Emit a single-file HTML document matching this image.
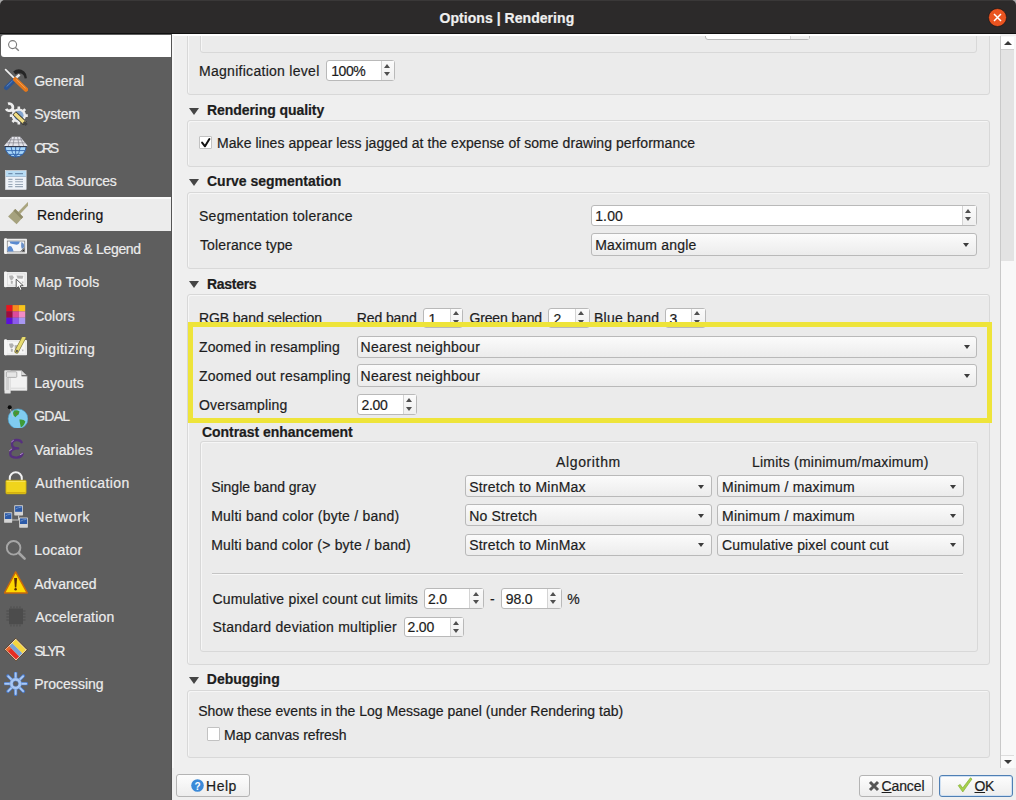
<!DOCTYPE html>
<html><head><meta charset="utf-8">
<style>
*{box-sizing:border-box}
html,body{margin:0;padding:0}
body{width:1016px;height:800px;overflow:hidden;position:relative;background:#efefef;font-family:"Liberation Sans",sans-serif;font-size:14px;color:#1d1d1d}
.a{position:absolute}
.t{position:absolute;white-space:nowrap;line-height:16px;-webkit-text-stroke:0.2px currentColor}
.b{font-weight:bold}
.w{color:#ececec}
.d{color:#141414}
#title{left:0;top:0;width:1016px;height:34px;background:#2c2a2a;border-radius:5px 5px 0 0}
#side{left:0;top:34px;width:172px;height:766px;background:#5e5e5e}
.si{position:absolute;left:0;width:171px;height:33.5px}
.si svg{position:absolute;left:4px;top:5px}
.si.sel{background:#ececec;border-top:2px solid #fafafa}
.si.sel svg{top:3px}
.gb{position:absolute;background:#ebebeb;border:1px solid #d8d8d8;border-radius:3px;box-shadow:inset 1px 1px 0 #f6f6f6}
.tri{position:absolute;width:0;height:0;border-left:5px solid transparent;border-right:5px solid transparent;border-top:7px solid #454545}
.cb{position:absolute;border:1px solid #b9b9b9;border-radius:3px;background:linear-gradient(#fbfbfb,#ececec)}
.cb .ar{position:absolute;right:6.6px;width:0;height:0;border-left:3.9px solid transparent;border-right:3.9px solid transparent;border-top:4.2px solid #3c3c3c}
.sp{position:absolute;border:1px solid #b9b9b9;border-radius:3px;background:#fff}
.sp .bt{position:absolute;right:0;top:0;bottom:0;border-left:1px solid #d4d4d4;background:linear-gradient(#fbfbfb,#efefef)}
.sp .up,.sp .dn{position:absolute;left:2.2px;width:0;height:0;border-left:3.7px solid transparent;border-right:3.7px solid transparent}
.sp .up{border-bottom:4px solid #505050}
.sp .dn{border-top:4px solid #505050}
.chk{position:absolute;width:13px;height:13px;background:#fff;border:1px solid #bdbdbd;border-radius:2px}
.btn{position:absolute;border:1px solid #b4b4b4;border-radius:3px;background:linear-gradient(#fdfdfd,#ededed)}
</style></head><body>
<div class="a" style="left:0;top:0;width:6px;height:6px;background:#a8a8a8"></div><div class="a" style="left:1010px;top:0;width:6px;height:6px;background:#a8a8a8"></div>
<div id="title" class="a"></div>
<div class="a" style="left:4px;top:0;width:1008px;height:1px;background:#3a3838"></div>
<svg class="a" style="left:988px;top:8px" width="19" height="19" viewBox="0 0 19 19"><circle cx="9.5" cy="9.5" r="9" fill="#e95420" stroke="#1a1010" stroke-width="0.6"/><path d="M6 6L13 13M13 6L6 13" stroke="#fff" stroke-width="1.5"/></svg>
<div id="tt" class="t b" style="left:439.60px;top:9.85px;letter-spacing:0.044px;color:#efefef">Options | Rendering</div>
<div class="a" style="left:0;top:33px;width:1016px;height:1px;background:#111"></div>
<div class="a" style="left:172px;top:34px;width:828px;height:1.5px;background:#fff"></div>
<div id="side" class="a"></div>
<div class="a" style="left:170.5px;top:34px;width:1.5px;height:766px;background:#555"></div>
<div class="a" style="left:172px;top:35px;width:2px;height:733px;background:#f7f7f7"></div>
<div class="a" style="left:1px;top:34.5px;width:170px;height:22.5px;background:#fff;border-radius:3px 0 0 3px"></div>
<svg class="a" style="left:8px;top:40px" width="12" height="12" viewBox="0 0 12 12"><circle cx="4.6" cy="4.6" r="4" fill="none" stroke="#7a7a7a" stroke-width="1.1"/><path d="M7.4 7.4L10.8 10.8" stroke="#808080" stroke-width="1.4"/></svg>
<div class="si" style="top:63.30px"><svg width="24" height="24" viewBox="0 0 24 24"><path d="M9.2 3.6Q14.5 -0.8 20.2 3.4Q23 5.8 22.8 10.2L20.6 10.4Q20.2 6.8 17.2 5.6Q14 4.6 11.4 6.6Z" fill="#262626"/>
<path d="M12.2 9.6L15.6 6.6" stroke="#e8e8e8" stroke-width="2.6"/>
<path d="M1.6 1.6L10.9 10.8" stroke="#f0f0f0" stroke-width="1.7" stroke-linecap="round"/>
<path d="M9.6 12.6L2.2 19.8" stroke="#2c5594" stroke-width="4.4" stroke-linecap="round"/><path d="M8.6 12.8L2.6 18.6" stroke="#5c88c8" stroke-width="1"/>
<path d="M11.2 11.4L22 21.6" stroke="#e4781c" stroke-width="4.4" stroke-linecap="round"/><path d="M12.2 11.4L21.6 20.4" stroke="#f4a050" stroke-width="1"/></svg></div>
<div id="s0" class="t w" style="left:34.20px;top:72.85px;letter-spacing:0.009px;">General</div>
<div class="si" style="top:96.83px"><svg width="24" height="24" viewBox="0 0 24 24"><g fill="#ececec"><circle cx="14.8" cy="13.6" r="7.2"/><g stroke="#ececec" stroke-width="2.6"><path d="M14.8 4.6V22.6M5.8 13.6H23.8M8.4 7.2L21.2 20M21.2 7.2L8.4 20"/></g></g>
<circle cx="14.8" cy="13.6" r="4.8" fill="#84a6d0"/>
<path d="M4.05 1.93A3.5 3.5 0 1 1 2.18 6.79" fill="none" stroke="#efefef" stroke-width="2.8"/><path d="M7.6 7.6L12.2 11.8" stroke="#efefef" stroke-width="2.8"/>
<path d="M10.2 11L21 21.4" stroke="#2e2e2e" stroke-width="5"/><path d="M10.6 11.4L20.6 21" stroke="#f0dc82" stroke-width="3.4"/><path d="M19.6 20L22.6 23" stroke="#444" stroke-width="3"/></svg></div>
<div id="s1" class="t w" style="left:34.20px;top:106.38px;letter-spacing:-0.180px;">System</div>
<div class="si" style="top:130.36px"><svg width="24" height="24" viewBox="0 0 24 24"><path d="M7.8 1.8H16.2L23.4 10.4Q23.4 11 23 11.6H0.6Q0.2 11 0.3 10.4Z" fill="#e4e4ea"/>
<g stroke="#8c8c94" stroke-width="0.8" fill="none"><path d="M5.5 4.8H18.5M2.6 7.8H21.4M10.4 1.8L8.8 11.6M13.6 1.8L15.2 11.6M7.8 1.8L4 11.6M16.2 1.8L20 11.6"/></g>
<path d="M1.2 11.6H22.1A10.45 10.45 0 0 1 1.2 11.6Z" fill="#a8d6fa" stroke="#2f62aa" stroke-width="1"/>
<g stroke="#2f62aa" stroke-width="0.9" fill="none"><path d="M2.2 15.6H21.1M5 19.4H18.3M11.65 11.6V22M7 11.6Q7.6 18.5 11.65 22M16.3 11.6Q15.7 18.5 11.65 22"/></g>
<path d="M0.4 11.6H23" stroke="#303038" stroke-width="0.9"/></svg></div>
<div id="s2" class="t w" style="left:34.20px;top:139.91px;letter-spacing:-2.375px;">CRS</div>
<div class="si" style="top:163.89px"><svg width="24" height="24" viewBox="0 0 24 24"><rect x="1.5" y="1.65" width="20.65" height="18.9" fill="#eef2f8" stroke="#e4e8ee" stroke-width="0.6"/>
<rect x="1.8" y="1.9" width="20.1" height="5.4" fill="#b8dcf4"/><path d="M1.8 7.5H21.9" stroke="#9ab4cc" stroke-width="0.8"/>
<g stroke="#6f8fb0" stroke-width="1.2"><path d="M4.3 4.6H8.5M11.1 4.6H19"/></g>
<g stroke="#9aa8b8" stroke-width="1.1"><path d="M4.3 10.4H8.5M11.1 10.4H19M4.3 12.8H8.5M11.1 12.8H19M4.3 15.5H8.5M11.1 15.5H19M4.3 17.6H8.5M11.1 17.6H19"/></g></svg></div>
<div id="s3" class="t w" style="left:34.20px;top:173.44px;letter-spacing:-0.201px;">Data Sources</div>
<div class="si sel" style="top:197.42px"><svg width="24" height="24" viewBox="0 0 24 24"><path d="M24.4 1.4L15.6 10.4" stroke="#aaa57f" stroke-width="2.8" stroke-linecap="round"/>
<path d="M11.3 7L19.1 15.1L12.6 22.3L4.1 14.5Z" fill="#a6a27e"/>
<path d="M11.3 7L19.1 15.1L17.4 16.9L9.5 8.8Z" fill="#8f8b68"/></svg></div>
<div id="s4" class="t d" style="left:37.00px;top:206.55px;letter-spacing:0.200px;">Rendering</div>
<div class="si" style="top:230.95px"><svg width="24" height="24" viewBox="0 0 24 24"><rect x="0.4" y="2.8" width="22.6" height="15" rx="0.8" fill="#ececec"/><rect x="0.1" y="2.2" width="3" height="15.8" rx="1.2" fill="#f6f6f6"/>
<rect x="3.25" y="5.05" width="17.5" height="10.85" fill="#f4f6fa" stroke="#777" stroke-width="0.7"/>
<path d="M5.6 5.4H15.8Q15 9 11.6 8.6Q8.6 8.2 6.4 7.6Z" fill="#5a8ad0"/>
<path d="M3.6 15.6V12Q5.2 9 7.4 10.6Q8.8 12.4 9.6 15.6Z" fill="#5a8ad0"/>
<path d="M17.4 6Q20.4 7 20.4 11L18 13Q16.6 11 17.4 6Z" fill="#6a90c8"/>
<path d="M16.2 15.6L20.4 11.6V15.6Z" fill="#2a2a2a"/><path d="M17 15.6L20.4 12.4" stroke="#eee" stroke-width="0.6"/></svg></div>
<div id="s5" class="t w" style="left:34.20px;top:240.50px;letter-spacing:-0.312px;">Canvas &amp; Legend</div>
<div class="si" style="top:264.48px"><svg width="24" height="24" viewBox="0 0 24 24"><rect x="0.4" y="3" width="22.6" height="15" rx="0.8" fill="#ececec"/><rect x="0.1" y="2.4" width="3" height="15.8" rx="1.2" fill="#f6f6f6"/>
<rect x="3.3" y="5" width="17.6" height="11" fill="#f6f6f6" stroke="#d0d0d0" stroke-width="0.5"/>
<g fill="#b4b4b4"><path d="M5 6.8L8.4 6.2L10 8.6L8 11.2L6 10.4Z"/><path d="M12.4 6.4L19.4 6.8L18.6 9.8L13.6 9.6Z"/><path d="M6.8 11.6L9 12.2L8.4 15.2L6.8 14.6Z"/><path d="M17.6 12.4L19.6 12.8L19 14.8Z"/></g>
<path d="M12.2 10.2V19.8L14.4 17.6L16.4 21.4L18 20.6L16.2 16.8L19.2 16.6Z" fill="#fafafa" stroke="#4a4a4a" stroke-width="0.9" stroke-linejoin="round"/></svg></div>
<div id="s6" class="t w" style="left:34.20px;top:274.03px;letter-spacing:0.182px;">Map Tools</div>
<div class="si" style="top:298.01px"><svg width="24" height="24" viewBox="0 0 24 24"><rect x="2.3" y="2.1" width="6.3" height="6.3" fill="#e8141e"/><rect x="8.6" y="2.1" width="6.3" height="6.3" fill="#f68a1e"/><rect x="14.9" y="2.1" width="6.3" height="6.3" fill="#f8c41c"/>
<rect x="2.3" y="8.4" width="6.3" height="6.3" fill="#9c0c3e"/><rect x="8.6" y="8.4" width="6.3" height="6.3" fill="#de4a9c"/><rect x="14.9" y="8.4" width="6.3" height="6.3" fill="#f28cc4"/>
<rect x="2.3" y="14.7" width="6.3" height="6.3" fill="#5c10dc"/><rect x="8.6" y="14.7" width="6.3" height="6.3" fill="#8c5aea"/><rect x="14.9" y="14.7" width="6.3" height="6.3" fill="#a898f2"/></svg></div>
<div id="s7" class="t w" style="left:34.20px;top:307.56px;letter-spacing:0.020px;">Colors</div>
<div class="si" style="top:331.54px"><svg width="24" height="24" viewBox="0 0 24 24"><rect x="0.4" y="2.9" width="22.6" height="15.4" rx="0.8" fill="#ececec"/><rect x="0.1" y="2.3" width="3" height="16" rx="1.2" fill="#f6f6f6"/>
<rect x="3.3" y="5" width="17.6" height="11.2" fill="#f6f6f6"/>
<g fill="#b0b0b0"><path d="M5 6.8L8.4 6.2L10 8.6L8 11.2L6 10.4Z"/><path d="M10.6 8.2L14 8L13.4 12L11 13.6Z"/><path d="M6.8 11.6L9 12.2L8.4 15.2L6.8 14.6Z"/><path d="M17.6 12.4L19.6 12.8L19 14.8Z"/></g>
<path d="M19.8 0.8L12.6 14.4" stroke="#8a8040" stroke-width="4.4" stroke-linecap="round"/><path d="M19.8 0.8L12.8 14" stroke="#e8dc70" stroke-width="3" stroke-linecap="round"/><path d="M13.4 13L12.4 15" stroke="#555" stroke-width="2"/></svg></div>
<div id="s8" class="t w" style="left:34.20px;top:341.09px;letter-spacing:0.434px;">Digitizing</div>
<div class="si" style="top:365.07px"><svg width="24" height="24" viewBox="0 0 24 24"><path d="M0.8 0.8H17.6L23 5.8V20.4H0.8Z" fill="#f2f2f2" stroke="#cfcfcf" stroke-width="0.6"/>
<path d="M17.6 0.8V5.8H23Z" fill="#5e5e5e"/><path d="M17.6 0.8L23 5.8H17.6Z" fill="#d8d8d8"/><path d="M17.6 5.8H23" stroke="#333" stroke-width="0.8"/>
<rect x="0.8" y="0.8" width="5.6" height="22.4" fill="#e6e6e6" stroke="#d4d4d4" stroke-width="0.5"/>
<g stroke="#a8a8a8" stroke-width="0.7"><path d="M2 9H5M2 11H5M2 13H5M2 15H5M2 17H5M2 19H5"/></g>
<rect x="2.4" y="1.8" width="10.4" height="5.6" rx="1" fill="#e6e6e6" stroke="#9a9a9a" stroke-width="0.7"/>
<path d="M7 18.2H21.5" stroke="#c8c8c8" stroke-width="0.6"/></svg></div>
<div id="s9" class="t w" style="left:34.20px;top:374.62px;letter-spacing:0.091px;">Layouts</div>
<div class="si" style="top:398.60px"><svg width="24" height="24" viewBox="0 0 24 24"><circle cx="14" cy="14.8" r="9.9" fill="#80ccf0" stroke="#4aa0cc" stroke-width="0.6"/>
<path d="M10 6.6Q13 5.6 15.6 7.4L14.6 10.6Q12.6 12 11.4 13.2L9.6 11.6Q8.4 8.6 10 6.6Z" fill="#3e9a38"/><path d="M11.4 8.4L13.8 8.8L12.8 10.6Z" fill="#8a6a30"/>
<path d="M15.4 15.6Q19.8 15 21.4 17.6Q20 22 16.8 23.4L16 19.6Z" fill="#3e9a38"/>
<path d="M6.2 4.8L9.2 13" stroke="#c8c8c8" stroke-width="0.8"/><circle cx="5.7" cy="3.3" r="2" fill="#080808"/></svg></div>
<div id="s10" class="t w" style="left:34.20px;top:408.15px;letter-spacing:-0.767px;">GDAL</div>
<div class="si" style="top:432.13px"><svg width="24" height="24" viewBox="0 0 24 24"><path d="M17.6 5.2C16.6 3.2 14.4 2.8 12 3C8.6 3.4 7.4 6 8.2 8.6C8.8 10.6 11 11.4 14.2 11.4M14.2 11.4C9.4 11.4 6.2 13.2 6.2 16.4C6.2 19.6 9.2 20.6 12.6 20.6C15.6 20.6 17.6 19.4 18.6 16.8" fill="none" stroke="#56307e" stroke-width="2.4" stroke-linecap="round"/>
<path d="M7.6 4.8L9.4 3.4M5.6 13.6L7.6 12.2M16.4 17.6L18.4 16.4" stroke="#b890d0" stroke-width="1" stroke-linecap="round"/></svg></div>
<div id="s11" class="t w" style="left:34.20px;top:441.68px;letter-spacing:0.150px;">Variables</div>
<div class="si" style="top:465.66px"><svg width="24" height="24" viewBox="0 0 24 24"><path d="M5.8 9.6V7.2A6 6 0 0 1 17.8 7.2V9.6" fill="none" stroke="#f2f2f2" stroke-width="2"/>
<rect x="1.85" y="9.24" width="20.3" height="13.66" rx="1" fill="#f0d41c" stroke="#b89c10" stroke-width="0.7"/>
<path d="M2.4 21.6H21.6" stroke="#d4b010" stroke-width="1.2"/><path d="M2.6 10.4H21.4" stroke="#f8e45c" stroke-width="1"/></svg></div>
<div id="s12" class="t w" style="left:35.20px;top:475.21px;letter-spacing:0.415px;">Authentication</div>
<div class="si" style="top:499.19px"><svg width="24" height="24" viewBox="0 0 24 24"><path d="M14.6 11.4V16H8" stroke="#c4c4c4" stroke-width="1.2" fill="none"/><path d="M14.6 14.6H16" stroke="#c4c4c4" stroke-width="1.2"/>
<rect x="10.25" y="1.3" width="8.75" height="10.15" rx="0.6" fill="#d4d4d4"/><rect x="11.1" y="2.2" width="7.1" height="5.6" fill="#2c5aa8"/><path d="M11.6 5Q14 3.6 17.6 3" stroke="#7ea4e0" stroke-width="0.8"/>
<rect x="0.1" y="8.3" width="8.05" height="10.5" rx="0.6" fill="#d4d4d4"/><rect x="0.9" y="9.2" width="6.5" height="5.8" fill="#2c5aa8"/><path d="M1.4 12Q3.6 10.6 6.8 10" stroke="#7ea4e0" stroke-width="0.8"/>
<rect x="15.15" y="13.55" width="8.75" height="10.15" rx="0.6" fill="#d4d4d4"/><rect x="16" y="14.4" width="7.1" height="5.6" fill="#2c5aa8"/><path d="M16.5 17.2Q18.9 15.8 22.5 15.2" stroke="#7ea4e0" stroke-width="0.8"/></svg></div>
<div id="s13" class="t w" style="left:34.20px;top:508.74px;letter-spacing:0.666px;">Network</div>
<div class="si" style="top:532.72px"><svg width="24" height="24" viewBox="0 0 24 24"><circle cx="9.6" cy="9.8" r="6.8" fill="none" stroke="#a6a6a6" stroke-width="1.9"/><path d="M15.1 15.2L20.6 20.6" stroke="#a6a6a6" stroke-width="2.6" stroke-linecap="round"/></svg></div>
<div id="s14" class="t w" style="left:34.20px;top:542.27px;letter-spacing:0.217px;">Locator</div>
<div class="si" style="top:566.25px"><svg width="24" height="24" viewBox="0 0 24 24"><path d="M11.65 0.95L23.2 21.95H0.45Z" fill="#ffd800" stroke="#c8680c" stroke-width="1.5" stroke-linejoin="round"/>
<path d="M10.1 6.9H13.1L12.3 16.4H10.9Z" fill="#5a2c04"/><circle cx="11.6" cy="18.2" r="1.25" fill="#5a2c04"/></svg></div>
<div id="s15" class="t w" style="left:34.20px;top:575.80px;letter-spacing:0.001px;">Advanced</div>
<div class="si" style="top:599.78px"><svg width="24" height="24" viewBox="0 0 24 24"><rect x="5" y="3.5" width="14" height="15.7" fill="#4c4c4c"/><g stroke="#535353" stroke-width="1.4"><path d="M7 1.2V3.5M10 1.2V3.5M13 1.2V3.5M16 1.2V3.5M7 19.2V21.6M10 19.2V21.6M13 19.2V21.6M16 19.2V21.6M2.4 6H5M2.4 9H5M2.4 12H5M2.4 15H5M19 6H21.6M19 9H21.6M19 12H21.6M19 15H21.6"/></g></svg></div>
<div id="s16" class="t w" style="left:35.20px;top:609.33px;letter-spacing:0.183px;">Acceleration</div>
<div class="si" style="top:633.31px"><svg width="24" height="24" viewBox="0 0 24 24"><path d="M11.8 0.3L23.2 11.7L12 22.9L0.6 11.35Z" fill="#f6e8d0" stroke="#4a2c10" stroke-width="0.8"/>
<path d="M11.8 1.6L21.9 11.7L18.3 15.3L8.2 5.2Z" fill="#f4d640"/>
<path d="M8.2 5.2L18.3 15.3L15.2 18.4L5.1 8.3Z" fill="#78a2d4"/>
<path d="M5.1 8.3L15.2 18.4L12 21.6L1.9 11.4Z" fill="#e42c24"/><path d="M5.1 8.3L1.9 11.4L4 13.5L7.2 10.4Z" fill="#ea6a2a"/></svg></div>
<div id="s17" class="t w" style="left:34.20px;top:642.86px;letter-spacing:-1.433px;">SLYR</div>
<div class="si" style="top:666.84px"><svg width="24" height="24" viewBox="0 0 24 24"><g stroke="#4a78c4" stroke-width="3.4" stroke-linecap="round"><path d="M11.65 0.8V22.5M0.8 11.66H22.5M3.9 3.9L19.4 19.4M19.4 3.9L3.9 19.4"/></g>
<g stroke="#a8c8f6" stroke-width="2" stroke-linecap="round"><path d="M11.65 1.2V22.1M1.2 11.66H22.1M4.2 4.2L19.1 19.1M19.1 4.2L4.2 19.1"/></g>
<circle cx="11.65" cy="11.66" r="5.8" fill="#a8c8f6" stroke="#6a94d4" stroke-width="0.5"/><circle cx="11.65" cy="11.66" r="2.6" fill="#5e5e5e" stroke="#4a70b0" stroke-width="0.6"/></svg></div>
<div id="s18" class="t w" style="left:34.20px;top:676.39px;letter-spacing:0.023px;">Processing</div>
<div id="vp" class="a" style="left:172px;top:35.5px;width:828px;height:732.5px;overflow:hidden"><div class="a" style="left:-172px;top:-35.5px;width:1016px;height:800px">
<div class="gb" style="left:186.6px;top:9.5px;width:803.4px;height:85.6px"></div>
<div class="gb" style="left:200.0px;top:-0.5px;width:776.6px;height:53.1px"></div>
<div class="sp" style="left:705px;top:18px;width:105px;height:22px"><div class="bt" style="width:19px"></div></div>
<div class="sp" style="left:325.6px;top:59.5px;width:69.5px;height:21.3px"><div class="bt" style="width:13.1px"><div class="up" style="top:3.1px"></div><div class="dn" style="top:11.6px"></div></div></div>
<div class="tri" style="left:188.75px;top:107.50px"></div>
<div class="gb" style="left:186.6px;top:119.5px;width:803.4px;height:47.6px"></div>
<div class="chk" style="left:199px;top:135.8px;width:13px;height:13px;border-radius:1px;border-color:#c2c2c2"><svg class="a" style="left:0;top:0" width="11" height="11" viewBox="0 0 11 11"><path d="M2.1 5.6L5 9.3L9.4 2" fill="none" stroke="#111" stroke-width="2" stroke-linejoin="round" stroke-linecap="round"/></svg></div>
<div class="tri" style="left:188.75px;top:178.75px"></div>
<div class="gb" style="left:186.6px;top:192.0px;width:803.4px;height:76.6px"></div>
<div class="sp" style="left:591.2px;top:205px;width:385.6px;height:20.8px"><div class="bt" style="width:13.8px"><div class="up" style="top:2.9px"></div><div class="dn" style="top:11.4px"></div></div></div>
<div class="cb" style="left:591.2px;top:233px;width:385.6px;height:22.8px"><div class="ar" style="top:8.9px"></div></div>
<div class="tri" style="left:188.75px;top:281.25px"></div>
<div class="gb" style="left:186.6px;top:294.0px;width:803.4px;height:371.0px"></div>
<div class="sp" style="left:423.20000000000005px;top:307.5px;width:40.1px;height:20.9px"><div class="bt" style="width:12.7px"><div class="up" style="top:2.9px"></div><div class="dn" style="top:11.4px"></div></div></div>
<div class="sp" style="left:548.4px;top:307.5px;width:41.2px;height:20.9px"><div class="bt" style="width:13.6px"><div class="up" style="top:2.9px"></div><div class="dn" style="top:11.4px"></div></div></div>
<div class="sp" style="left:664.6px;top:307.5px;width:41.3px;height:20.9px"><div class="bt" style="width:13.6px"><div class="up" style="top:2.9px"></div><div class="dn" style="top:11.4px"></div></div></div>
<div class="cb" style="left:357.1px;top:335.6px;width:620.3px;height:22.7px"><div class="ar" style="top:8.8px"></div></div>
<div class="cb" style="left:357.1px;top:364.4px;width:620.3px;height:22.6px"><div class="ar" style="top:8.8px"></div></div>
<div class="sp" style="left:357.1px;top:394.3px;width:59.8px;height:20.7px"><div class="bt" style="width:13.2px"><div class="up" style="top:2.8px"></div><div class="dn" style="top:11.3px"></div></div></div>
<div class="gb" style="left:199.6px;top:440.75px;width:778.0px;height:211.4px"></div>
<div class="cb" style="left:464.8px;top:475.3px;width:246.8px;height:22.2px"><div class="ar" style="top:8.6px"></div></div>
<div class="cb" style="left:716.9px;top:475.3px;width:246.9px;height:22.2px"><div class="ar" style="top:8.6px"></div></div>
<div class="cb" style="left:464.8px;top:504.3px;width:246.8px;height:22.2px"><div class="ar" style="top:8.6px"></div></div>
<div class="cb" style="left:716.9px;top:504.3px;width:246.9px;height:22.2px"><div class="ar" style="top:8.6px"></div></div>
<div class="cb" style="left:464.8px;top:533.5px;width:246.8px;height:22.2px"><div class="ar" style="top:8.6px"></div></div>
<div class="cb" style="left:716.9px;top:533.5px;width:246.9px;height:22.2px"><div class="ar" style="top:8.6px"></div></div>
<div class="a" style="left:212px;top:572.5px;width:751px;height:1px;background:#c4c4c4"></div><div class="a" style="left:212px;top:573.5px;width:751px;height:1px;background:#f7f7f7"></div>
<div class="sp" style="left:423.70000000000005px;top:588.3px;width:60.1px;height:20.3px"><div class="bt" style="width:13.4px"><div class="up" style="top:2.7px"></div><div class="dn" style="top:11.2px"></div></div></div>
<div class="sp" style="left:500.90000000000003px;top:588.3px;width:61.0px;height:20.3px"><div class="bt" style="width:13.9px"><div class="up" style="top:2.7px"></div><div class="dn" style="top:11.2px"></div></div></div>
<div class="sp" style="left:403.5px;top:617px;width:60.6px;height:20.2px"><div class="bt" style="width:13.6px"><div class="up" style="top:2.6px"></div><div class="dn" style="top:11.1px"></div></div></div>
<div class="tri" style="left:188.75px;top:676.75px"></div>
<div class="gb" style="left:186.6px;top:689.5px;width:803.4px;height:68.6px"></div>
<div class="chk" style="left:206.5px;top:727.3px;width:13px;height:13.5px;border-radius:1px;border-color:#c2c2c2"></div>
<div id="c1" class="t" style="left:199.00px;top:62.85px;letter-spacing:0.283px;">Magnification level</div>
<div id="c2" class="t" style="left:331.20px;top:62.85px;letter-spacing:-0.433px;">100%</div>
<div id="c3" class="t b" style="left:207.00px;top:102.15px;letter-spacing:-0.062px;">Rendering quality</div>
<div id="c4" class="t" style="left:217.00px;top:135.15px;letter-spacing:0.059px;">Make lines appear less jagged at the expense of some drawing performance</div>
<div id="c5" class="t b" style="left:207.00px;top:173.40px;letter-spacing:-0.014px;">Curve segmentation</div>
<div id="c6" class="t" style="left:199.00px;top:207.90px;letter-spacing:0.271px;">Segmentation tolerance</div>
<div id="c7" class="t" style="left:595.20px;top:207.90px;letter-spacing:0.134px;">1.00</div>
<div id="c8" class="t" style="left:200.00px;top:236.65px;letter-spacing:0.123px;">Tolerance type</div>
<div id="c9" class="t" style="left:595.20px;top:236.65px;letter-spacing:0.184px;">Maximum angle</div>
<div id="c10" class="t b" style="left:207.00px;top:275.90px;letter-spacing:-0.292px;">Rasters</div>
<div id="c11" class="t" style="left:199.00px;top:310.15px;letter-spacing:-0.094px;">RGB band selection</div>
<div id="c12" class="t" style="left:356.80px;top:310.15px;letter-spacing:-0.114px;">Red band</div>
<div id="c13" class="t" style="left:428.50px;top:310.95px;letter-spacing:0.200px;">1</div>
<div id="c14" class="t" style="left:469.40px;top:310.15px;letter-spacing:-0.133px;">Green band</div>
<div id="c15" class="t" style="left:553.50px;top:310.95px;letter-spacing:0.200px;">2</div>
<div id="c16" class="t" style="left:594.00px;top:310.15px;letter-spacing:0.239px;">Blue band</div>
<div id="c17" class="t" style="left:669.50px;top:310.95px;letter-spacing:0.200px;">3</div>
<div id="c18" class="t" style="left:199.00px;top:339.15px;letter-spacing:0.121px;">Zoomed in resampling</div>
<div id="c19" class="t" style="left:360.60px;top:338.75px;letter-spacing:0.251px;">Nearest neighbour</div>
<div id="c20" class="t" style="left:199.00px;top:367.65px;letter-spacing:0.225px;">Zoomed out resampling</div>
<div id="c21" class="t" style="left:360.60px;top:367.55px;letter-spacing:0.251px;">Nearest neighbour</div>
<div id="c22" class="t" style="left:199.00px;top:396.65px;letter-spacing:0.178px;">Oversampling</div>
<div id="c23" class="t" style="left:361.60px;top:396.65px;letter-spacing:-0.333px;">2.00</div>
<div id="c24" class="t b" style="left:202.00px;top:424.05px;letter-spacing:-0.053px;">Contrast enhancement</div>
<div id="c25" class="t" style="left:556.00px;top:453.85px;letter-spacing:0.638px;">Algorithm</div>
<div id="c26" class="t" style="left:752.00px;top:453.85px;letter-spacing:0.226px;">Limits (minimum/maximum)</div>
<div id="r0a" class="t" style="left:211.20px;top:478.75px;letter-spacing:-0.020px;">Single band gray</div>
<div id="r0b" class="t" style="left:469.20px;top:478.95px;letter-spacing:0.226px;">Stretch to MinMax</div>
<div id="r0c" class="t" style="left:722.00px;top:478.95px;letter-spacing:0.224px;">Minimum / maximum</div>
<div id="r1a" class="t" style="left:211.20px;top:507.75px;letter-spacing:0.228px;">Multi band color (byte / band)</div>
<div id="r1b" class="t" style="left:469.20px;top:507.95px;letter-spacing:0.200px;">No Stretch</div>
<div id="r1c" class="t" style="left:722.00px;top:507.95px;letter-spacing:0.224px;">Minimum / maximum</div>
<div id="r2a" class="t" style="left:211.20px;top:536.95px;letter-spacing:0.200px;">Multi band color (&gt; byte / band)</div>
<div id="r2b" class="t" style="left:469.20px;top:537.15px;letter-spacing:0.226px;">Stretch to MinMax</div>
<div id="r2c" class="t" style="left:722.00px;top:537.15px;letter-spacing:0.116px;">Cumulative pixel count cut</div>
<div id="c27" class="t" style="left:212.40px;top:590.55px;letter-spacing:0.193px;">Cumulative pixel count cut limits</div>
<div id="c28" class="t" style="left:428.00px;top:590.55px;letter-spacing:-0.250px;">2.0</div>
<div id="c29" class="t" style="left:490.00px;top:590.55px;letter-spacing:0.200px;">-</div>
<div id="c30" class="t" style="left:505.80px;top:590.55px;letter-spacing:-0.133px;">98.0</div>
<div id="c31" class="t" style="left:567.20px;top:590.55px;letter-spacing:0.200px;">%</div>
<div id="c32" class="t" style="left:212.40px;top:619.35px;letter-spacing:0.271px;">Standard deviation multiplier</div>
<div id="c33" class="t" style="left:407.60px;top:619.35px;letter-spacing:-0.200px;">2.00</div>
<div id="c34" class="t b" style="left:206.80px;top:671.40px;letter-spacing:-0.025px;">Debugging</div>
<div id="c35" class="t" style="left:198.20px;top:702.95px;letter-spacing:0.027px;">Show these events in the Log Message panel (under Rendering tab)</div>
<div id="c36" class="t" style="left:224.00px;top:726.65px;letter-spacing:-0.018px;">Map canvas refresh</div>
<div class="a" style="left:187.5px;top:322px;height:100.5px;border:5px solid #eee43a;width:804.5px"></div>
</div></div>
<div class="a" style="left:1000px;top:35.5px;width:16px;height:732.5px;background:#f8f8f8;border-left:1px solid #c9c9c9"></div>
<div class="a" style="left:1001px;top:37px;width:12.5px;height:12px;background:#fff"></div>
<div class="a" style="left:1003.5px;top:40.5px;width:0;height:0;border-left:4px solid transparent;border-right:4px solid transparent;border-bottom:4px solid #3a3a3a"></div>
<div class="a" style="left:1001px;top:49px;width:12.5px;height:212px;background:#e3e3e3;border-top:1px solid #d0d0d0"></div>
<div class="a" style="left:1001px;top:755px;width:12.5px;height:13px;background:#fafafa;border-top:1px solid #ddd"></div>
<div class="a" style="left:1003.5px;top:760px;width:0;height:0;border-left:4px solid transparent;border-right:4px solid transparent;border-top:4px solid #3a3a3a"></div>
<div class="btn" style="left:176.2px;top:774.4px;width:73.8px;height:22.2px"></div>
<svg class="a" style="left:191px;top:778.5px" width="13" height="13" viewBox="0 0 13 13"><circle cx="6.5" cy="6.5" r="6.3" fill="#3b8ad8"/><text x="6.5" y="10.5" text-anchor="middle" font-family="Liberation Sans" font-weight="bold" font-size="10" fill="#fff">?</text></svg>
<div id="b1" class="t" style="left:206.10px;top:777.95px;letter-spacing:0.450px;">Help</div>
<div class="btn" style="left:859px;top:774.5px;width:73.5px;height:22px"></div>
<svg class="a" style="left:867.5px;top:779.5px" width="12" height="12" viewBox="0 0 12 12"><path d="M2 2L10 10M10 2L2 10" stroke="#555" stroke-width="3"/></svg>
<div id="b2" class="t" style="left:881.60px;top:777.95px;letter-spacing:-0.140px;"><u>C</u>ancel</div>
<div class="btn" style="left:939px;top:774.5px;width:73.6px;height:22px;border-color:#4f7fb4;box-shadow:inset 0 0 0 1px #cfe0f2"></div>
<svg class="a" style="left:957px;top:777px" width="16" height="16" viewBox="0 0 16 16"><path d="M1.2 8.6L3.2 7.4L5.6 11L13.4 0.8L15 2L5.8 15Z" fill="#a6d04a" stroke="#7aa82c" stroke-width="0.6" stroke-linejoin="round"/></svg>
<div id="b3" class="t" style="left:974.50px;top:777.95px;letter-spacing:-0.300px;"><u>O</u>K</div>
</body></html>
